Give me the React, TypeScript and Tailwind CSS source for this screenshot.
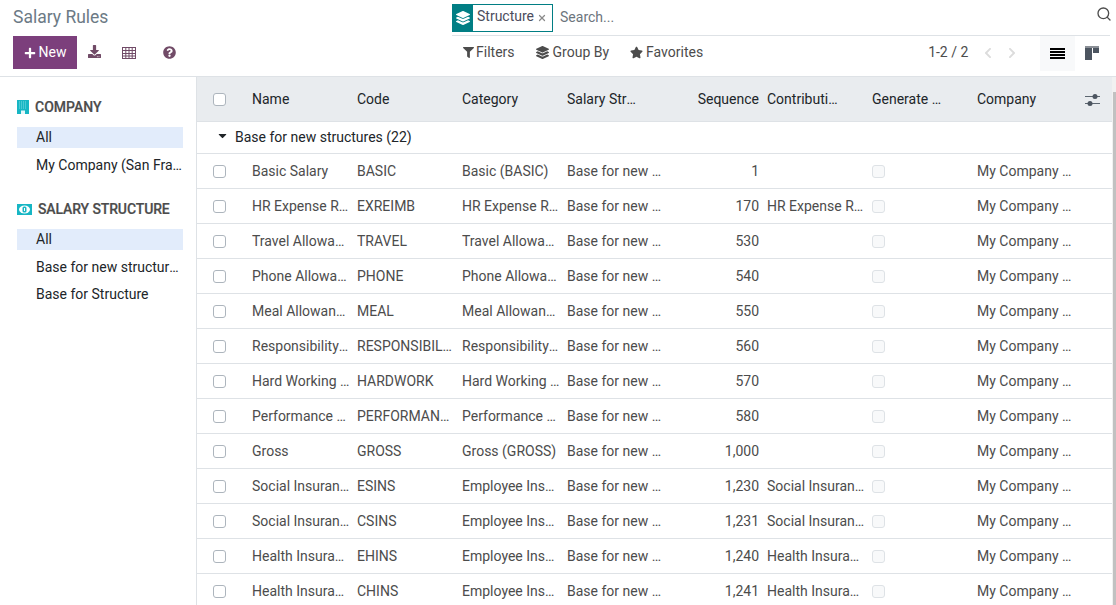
import { Search, X } from 'lucide-react';
import { FaPlus, FaQuestionCircle, FaFilter, FaLayerGroup, FaStar, FaChevronLeft, FaChevronRight, FaCaretDown, FaDownload } from 'react-icons/fa';

const rows = [
  ['Basic Salary', 'BASIC', 'Basic (BASIC)', '1', ''],
  ['HR Expense Reimbursement', 'EXREIMB', 'HR Expense Reimbursement', '170', 'HR Expense Reimbursement'],
  ['Travel Allowance', 'TRAVEL', 'Travel Allowance', '530', ''],
  ['Phone Allowance', 'PHONE', 'Phone Allowance', '540', ''],
  ['Meal Allowance', 'MEAL', 'Meal Allowance', '550', ''],
  ['Responsibility Allowance', 'RESPONSIBILITY', 'Responsibility Allowance', '560', ''],
  ['Hard Working Allowance', 'HARDWORK', 'Hard Working Allowance', '570', ''],
  ['Performance Allowance', 'PERFORMANCE', 'Performance Allowance', '580', ''],
  ['Gross', 'GROSS', 'Gross (GROSS)', '1,000', ''],
  ['Social Insurance (ES)', 'ESINS', 'Employee Insurance', '1,230', 'Social Insurance'],
  ['Social Insurance (CS)', 'CSINS', 'Employee Insurance', '1,231', 'Social Insurance'],
  ['Health Insurance (EH)', 'EHINS', 'Employee Insurance', '1,240', 'Health Insurance'],
  ['Health Insurance (CH)', 'CHINS', 'Employee Insurance', '1,241', 'Health Insurance'],
];

function Check({ light }: { light?: boolean }) {
  return (
    <span
      className={`block h-[13px] w-[13px] rounded-[3px] border ${
        light ? 'border-[#dee2e6] bg-[#f8f9fa]' : 'border-[#adb5bd] bg-white'
      }`}
    />
  );
}

function Cell({ children }: { children?: React.ReactNode }) {
  return (
    <td className="pl-2 pt-[2px]">
      <div className="w-[98px] truncate">{children}</div>
    </td>
  );
}

function GridIcon() {
  return (
    <svg width="14" height="12" viewBox="0 0 14 12" fill="none" stroke="#714b67" className="ml-[21px]">
      <rect x="0.5" y="0.5" width="13" height="11" />
      <path d="M0 3.5h14M0 6.5h14M0 9h14M3.8 0v12M7 0v12M10.2 0v12" />
    </svg>
  );
}

function BuildingIcon() {
  return (
    <svg width="12" height="14" viewBox="0 0 12 14" className="flex-none">
      <rect width="12" height="14" fill="#17b6c4" />
      <path d="M2 2h8M2 4h8M2 6h8M2 8h8" stroke="#7fdbe3" strokeDasharray="1 1" />
      <rect x="4" y="10.5" width="4" height="3.5" fill="#e4f8fa" />
    </svg>
  );
}

function MoneyIcon() {
  return (
    <svg width="15" height="11" viewBox="0 0 15 11" className="flex-none">
      <rect width="15" height="11" fill="#17b6c4" />
      <ellipse cx="7.5" cy="5.5" rx="5.5" ry="4" fill="#ffffff" />
      <rect x="5.5" y="2.5" width="4" height="6" rx="1.5" fill="#17b6c4" />
      <rect x="7" y="4" width="1" height="3" fill="#ffffff" />
    </svg>
  );
}

function SlidersIcon() {
  return (
    <svg width="15" height="14" viewBox="0 0 15 14" fill="none">
      <path d="M0 3.5h15M0 10.5h15" stroke="#5c6670" />
      <circle cx="10" cy="3.5" r="2.5" fill="#4c5560" />
      <circle cx="5" cy="10.5" r="2.5" fill="#4c5560" />
    </svg>
  );
}

export default function App() {
  return (
    <div className="flex h-[605px] w-[1116px] flex-col overflow-hidden bg-white font-['Roboto',sans-serif] text-[14px] text-[#4c4c4c]">
      <div className="flex h-[77px] flex-none border-b border-[#dee2e6]">
        <div className="w-[452px] flex-none pl-[13px]">
          <div className="h-[36px] pt-[5px] text-[17.5px] leading-[24px] text-[#6c7a85]">Salary Rules</div>
          <div className="flex items-center">
            <button className="flex h-[33px] w-[64px] items-center justify-center gap-[3px] bg-[#7c3f7c] text-white">
              <FaPlus size={12} />
              <span>New</span>
            </button>
            <FaDownload size={13} className="mb-[2px] ml-[11px] text-[#714b67]" />
            <GridIcon />
            <FaQuestionCircle size={13} className="ml-[27px] text-[#714b67]" />
          </div>
        </div>
        <div className="w-[658px] flex-none">
          <div className="flex h-[36px] items-start border-b border-[#dee2e6] pt-[4px]">
            <div className="flex h-[28px] items-center border border-[#017e84]">
              <span className="flex h-full w-[20px] items-center justify-center bg-[#017e84] text-white">
                <FaLayerGroup size={14} />
              </span>
              <span className="pb-[4px] pl-[4px] text-[#4c4c5c]">Structure</span>
              <X size={10} strokeWidth={3} className="ml-[3px] mr-[5px] text-[#8a8a8a]" />
            </div>
            <span className="ml-[7px] pt-[3px] text-[#6c757d]">Search...</span>
            <Search size={16} strokeWidth={2} className="ml-auto mr-[-2px] mt-[2px] text-[#4c4c4c]" />
          </div>
          <div className="flex h-[33px] items-center">
            <FaFilter size={11} className="ml-[11px]" />
            <span className="ml-[2px]">Filters</span>
            <FaLayerGroup size={13} className="ml-[21px]" />
            <span className="ml-[4px]">Group By</span>
            <FaStar size={13} className="ml-[21px]" />
            <span className="ml-[3px]">Favorites</span>
            <span className="ml-[225px]">1-2 / 2</span>
            <FaChevronLeft size={12} className="ml-[14px] text-[#dcdcdc]" />
            <FaChevronRight size={12} className="ml-[12px] text-[#dcdcdc]" />
            <span className="ml-[22px] flex h-[35px] w-[35px] flex-none items-center justify-center self-start bg-[#f8f9fa] text-black">
              <span className="flex h-[12px] w-[15px] flex-col justify-between">
                <i className="block h-[2px] bg-black" />
                <i className="block h-[2px] bg-black" />
                <i className="block h-[2px] bg-black" />
                <i className="block h-[2px] bg-black" />
              </span>
            </span>
            <span className="ml-[10px] flex h-[14px] w-[14px] flex-col">
              <i className="block h-[2px] bg-[#8a8f96]" />
              <span className="flex flex-1 gap-[1px]">
                <i className="block h-[12px] w-[7px] bg-[#4c5560]" />
                <i className="block h-[5px] w-[6px] bg-[#4c5560]" />
              </span>
            </span>
          </div>
        </div>
      </div>
      <div className="flex min-h-0 flex-1">
        <aside className="w-[197px] flex-none border-r border-[#dee2e6] pl-[17px] pt-[21px]">
          <div className="flex h-[18px] items-center font-medium text-[#4c4c4c] [-webkit-text-stroke:0.2px]">
            <BuildingIcon />
            <span className="ml-[6px]">COMPANY</span>
          </div>
          <div className="mt-[11px] h-[21px] w-[166px] bg-[#e2ecfb] pl-[19px] leading-[21px] text-[#212529]">All</div>
          <div className="mt-[7px] w-[166px] truncate pl-[19px] leading-[21px] text-[#212529]">My Company (San Francisco)</div>
          <div className="mt-[24px] flex h-[18px] items-center font-medium text-[#4c4c4c] [-webkit-text-stroke:0.2px]">
            <MoneyIcon />
            <span className="ml-[6px] tracking-[-0.12px]">SALARY STRUCTURE</span>
          </div>
          <div className="mt-[11px] h-[21px] w-[166px] bg-[#e2ecfb] pl-[19px] leading-[21px] text-[#212529]">All</div>
          <div className="mt-[7px] w-[166px] truncate pl-[19px] leading-[21px] text-[#212529]">Base for new structures</div>
          <div className="mt-[6px] w-[166px] truncate pl-[19px] leading-[21px] text-[#212529]">Base for Structure</div>
        </aside>
        <div className="w-[915px] flex-none">
          <table className="w-[915px] table-fixed border-collapse">
            <colgroup>
              <col className="w-[47px]" />
              <col className="w-[105px]" />
              <col className="w-[105px]" />
              <col className="w-[105px]" />
              <col className="w-[105px]" />
              <col className="w-[95px]" />
              <col className="w-[105px]" />
              <col className="w-[105px]" />
              <col className="w-[105px]" />
              <col className="w-[38px]" />
            </colgroup>
            <thead>
              <tr className="h-[44px] border-b border-[#dee2e6] bg-[#e9ecef] text-left text-[#212529]">
                <th className="pl-[16px] pt-[2px]"><Check /></th>
                <th className="truncate pl-2 pt-[2px] font-normal">Name</th>
                <th className="truncate pl-2 pt-[2px] font-normal">Code</th>
                <th className="truncate pl-2 pt-[2px] font-normal">Category</th>
                <th className="truncate pl-2 pr-[24px] pt-[2px] font-normal">Salary Structure</th>
                <th className="truncate pl-2 pt-[2px] text-right font-normal">Sequence</th>
                <th className="truncate pl-2 pr-[24px] pt-[2px] font-normal">Contribution Register</th>
                <th className="truncate pl-2 pr-[24px] pt-[2px] font-normal">Generate Payslip</th>
                <th className="truncate pl-2 pt-[2px] font-normal">Company</th>
                <th className="pl-[11px] pt-[2px]"><SlidersIcon /></th>
              </tr>
            </thead>
            <tbody>
              <tr className="h-[32px] border-b border-[#dee2e6] text-[#212529]">
                <td colSpan={10} className="pl-[19px]">
                  <span className="flex items-center gap-[6px]">
                    <FaCaretDown size={13} className="mb-[4px]" />
                    Base for new structures (22)
                  </span>
                </td>
              </tr>
              {rows.map((r) => (
                <tr key={r[1]} className="h-[35px] border-b border-[#dee2e6]">
                  <td className="pl-[16px] pt-[2px]"><Check /></td>
                  <Cell>{r[0]}</Cell>
                  <Cell>{r[1]}</Cell>
                  <Cell>{r[2]}</Cell>
                  <Cell>Base for new structures</Cell>
                  <td className="pt-[2px] text-right">{r[3]}</td>
                  <Cell>{r[4]}</Cell>
                  <td className="pl-2 pt-[2px]"><Check light /></td>
                  <Cell>My Company (San Francisco)</Cell>
                  <td />
                </tr>
              ))}
            </tbody>
          </table>
        </div>
        <div className="w-[4px] flex-none bg-[#f1f1f1] pl-[1px] pt-[15px]">
          <div className="h-full bg-[#c1c1c1]" />
        </div>
      </div>
    </div>
  );
}
